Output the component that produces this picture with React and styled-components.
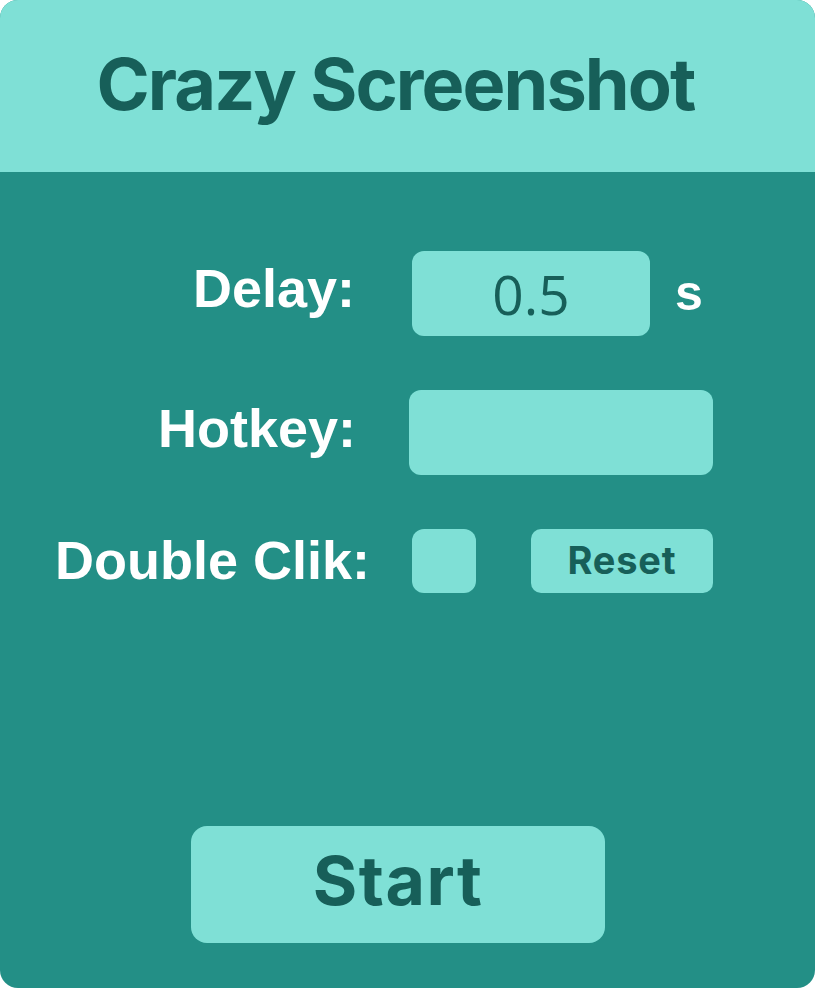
import React from "react";
import styled, { createGlobalStyle } from "styled-components";

const Global = createGlobalStyle`
  html, body { margin: 0; padding: 0; background: #ffffff; }
  #root { width: 815px; height: 988px; }
`;

const Window = styled.div`
  width: 815px;
  height: 988px;
  border-radius: 18px;
  overflow: hidden;
  background: #238f86;
  display: flex;
  flex-direction: column;
`;

const Header = styled.header`
  height: 172px;
  flex: none;
  background: #7fe0d6;
  display: flex;
  align-items: center;
  justify-content: center;
  padding-right: 24px;
  box-sizing: border-box;
`;

const Title = styled.h1`
  margin: 0;
  font-family: Inter, "Liberation Sans", sans-serif;
  font-weight: 700;
  font-size: 72px;
  letter-spacing: -1.9px;
  color: #175f59;
  padding-bottom: 6px;
`;

const Body = styled.main`
  flex: 1;
  display: flex;
  flex-direction: column;
  padding-top: 79px;
`;

const Form = styled.div`
  display: grid;
  grid-template-columns: 370px auto;
  row-gap: 54px;
  align-items: center;
`;

const Label = styled.div`
  font-family: "Liberation Sans", Arial, sans-serif;
  font-weight: 700;
  font-size: 54px;
  color: #ffffff;
  text-align: right;
  padding-right: ${(p) => p.$inset}px;
  padding-bottom: ${(p) => p.$lift || 0}px;
  white-space: nowrap;
`;

const Controls = styled.div`
  display: flex;
  align-items: center;
  padding-left: ${(p) => p.$offset}px;
`;

const Field = styled.div`
  width: ${(p) => p.$w}px;
  height: ${(p) => p.$h}px;
  border-radius: 12px;
  background: #7fe0d6;
  display: flex;
  align-items: center;
  justify-content: center;
  font-family: "Open Sans", sans-serif;
  font-weight: 400;
  font-size: 55px;
  color: #175f59;
`;

const Unit = styled.span`
  font-family: "Liberation Sans", Arial, sans-serif;
  font-weight: 700;
  font-size: 50px;
  color: #ffffff;
  margin-left: 25px;
  padding-bottom: 2px;
`;

const SmallButton = styled.button`
  width: 182px;
  height: 64px;
  margin-left: 55px;
  border: none;
  border-radius: 10px;
  background: #7fe0d6;
  color: #175f59;
  font-family: Inter, sans-serif;
  font-weight: 700;
  font-size: 38px;
  letter-spacing: 0.8px;
  padding: 0 0 2px;
`;

const StartButton = styled.button`
  align-self: flex-start;
  margin: auto 0 45px 191px;
  width: 414px;
  height: 117px;
  border: none;
  border-radius: 16px;
  background: #7fe0d6;
  color: #175f59;
  font-family: Inter, sans-serif;
  font-weight: 700;
  font-size: 68px;
  letter-spacing: 1.5px;
  padding: 0 0 10px 0;
`;

export default function App() {
  return (
    <>
      <Global />
      <Window>
        <Header>
          <Title>Crazy Screenshot</Title>
        </Header>
        <Body>
          <Form>
            <Label $inset={15} $lift={12}>Delay:</Label>
            <Controls $offset={42}>
              <Field $w={238} $h={85}>0.5</Field>
              <Unit>s</Unit>
            </Controls>
            <Label $inset={14} $lift={10}>Hotkey:</Label>
            <Controls $offset={39}>
              <Field $w={304} $h={85} />
            </Controls>
            <Label $inset={0} $lift={2}>Double Clik:</Label>
            <Controls $offset={42}>
              <Field $w={64} $h={64} />
              <SmallButton>Reset</SmallButton>
            </Controls>
          </Form>
          <StartButton>Start</StartButton>
        </Body>
      </Window>
    </>
  );
}
